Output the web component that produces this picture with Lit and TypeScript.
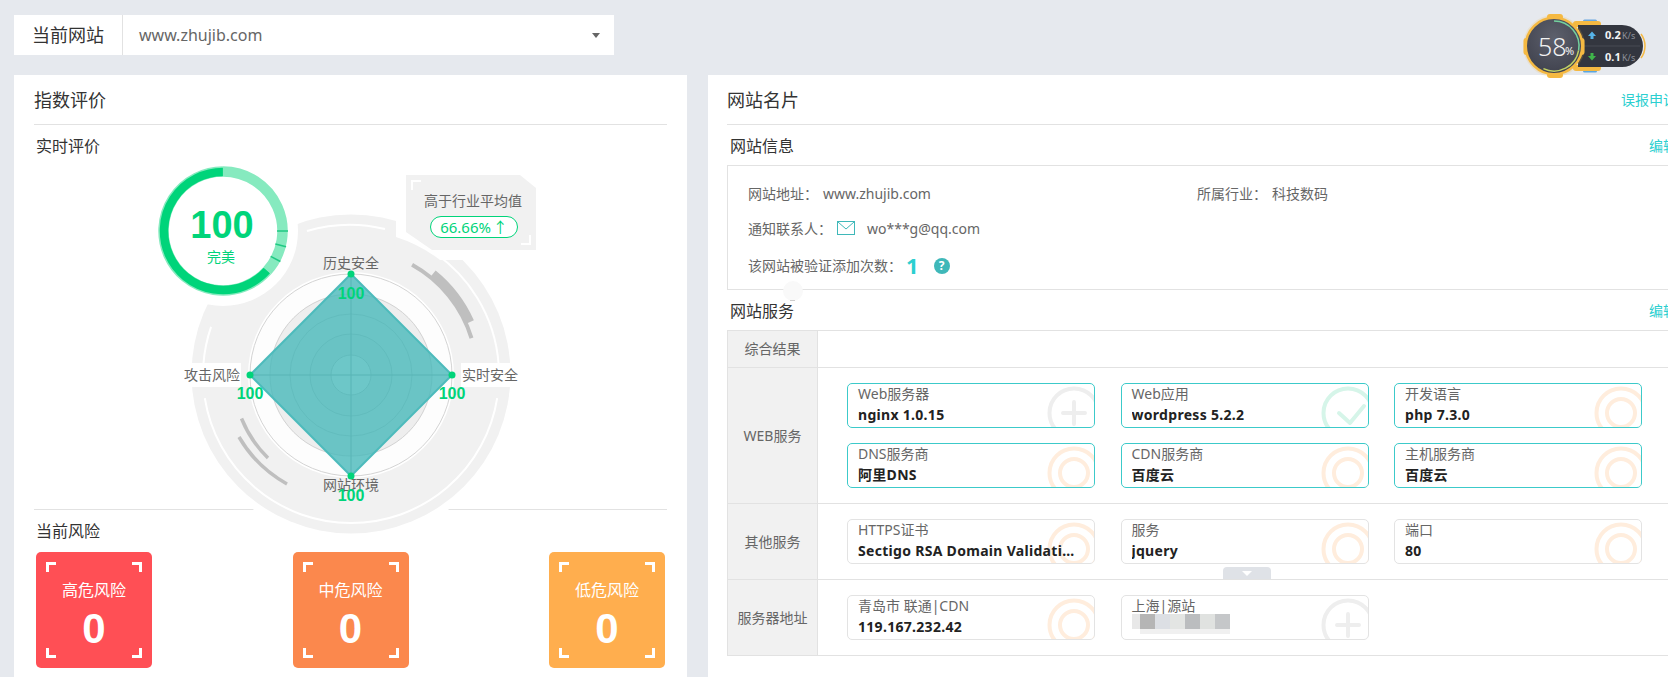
import { LitElement, html, svg, css } from 'lit';
import { customElement } from 'lit/decorators.js';
import { classMap } from 'lit/directives/class-map.js';

type IconKind = 'plus' | 'check' | 'rings';

interface Tile {
    title: string;
    value: string;
    icon: IconKind;
    masked?: boolean;
}

interface ServiceRow {
    label: string;
    active: boolean;
    tiles: Tile[];
}

const rows: ServiceRow[] = [
    {
        label: 'WEB服务',
        active: true,
        tiles: [
            { title: 'Web服务器', value: 'nginx 1.0.15', icon: 'plus' },
            { title: 'Web应用', value: 'wordpress 5.2.2', icon: 'check' },
            { title: '开发语言', value: 'php 7.3.0', icon: 'rings' },
            { title: 'DNS服务商', value: '阿里DNS', icon: 'rings' },
            { title: 'CDN服务商', value: '百度云', icon: 'rings' },
            { title: '主机服务商', value: '百度云', icon: 'rings' }
        ]
    },
    {
        label: '其他服务',
        active: false,
        tiles: [
            { title: 'HTTPS证书', value: 'Sectigo RSA Domain Validation Secure Server CA', icon: 'rings' },
            { title: '服务', value: 'jquery', icon: 'rings' },
            { title: '端口', value: '80', icon: 'rings' }
        ]
    },
    {
        label: '服务器地址',
        active: false,
        tiles: [
            { title: '青岛市 联通|CDN', value: '119.167.232.42', icon: 'rings' },
            { title: '上海|源站', value: '', icon: 'plus', masked: true }
        ]
    }
];

const risks = [
    { label: '高危风险', value: 0, color: '#ff4f55' },
    { label: '中危风险', value: 0, color: '#fb884d' },
    { label: '低危风险', value: 0, color: '#ffae4e' }
];

const mosaic = ['#b5b5b5', '#dcdfe4', '#e3e5e3', '#bbbdbf', '#e0e2e0', '#c5c7c9'];

// angles are clockwise from twelve o'clock
function arc(cx: number, cy: number, r: number, from: number, to: number) {
    const pt = (a: number) => {
        const t = (a * Math.PI) / 180;
        return `${(cx + r * Math.sin(t)).toFixed(2)} ${(cy - r * Math.cos(t)).toFixed(2)}`;
    };
    const large = to - from > 180 ? 1 : 0;
    return `M${pt(from)} A${r} ${r} 0 ${large} 1 ${pt(to)}`;
}

function tick(cx: number, cy: number, r0: number, r1: number, a: number) {
    const t = (a * Math.PI) / 180;
    return `M${cx + r0 * Math.sin(t)} ${cy - r0 * Math.cos(t)} L${cx + r1 * Math.sin(t)} ${cy - r1 * Math.cos(t)}`;
}

@customElement('radar-chart')
export class RadarChart extends LitElement {
    static styles = css`
        :host {
            display: block;
        }
        svg {
            display: block;
            overflow: visible;
        }
        text {
            font-family: "Noto Sans", "Noto Sans CJK SC", sans-serif;
        }
        .axis {
            font-size: 14px;
            fill: #666;
        }
        .score {
            font-family: "Liberation Sans", sans-serif;
            font-size: 16px;
            font-weight: 700;
            fill: #00d47a;
        }
        .big {
            font-family: "Liberation Sans", sans-serif;
            font-size: 38px;
            font-weight: 700;
            fill: #00d47a;
        }
        .word {
            font-size: 14px;
            fill: #00d47a;
        }
        .hint {
            font-size: 14px;
            fill: #666;
        }
        .pct {
            font-size: 15px;
            word-spacing: -2px;
            fill: #00d47a;
        }
    `;

    render() {
        const cx = 351;
        const cy = 375;
        const labels = [
            { x: 351, y: 262, anchor: 'middle', text: '历史安全' },
            { x: 240, y: 374, anchor: 'end', text: '攻击风险' },
            { x: 462, y: 374, anchor: 'start', text: '实时安全' },
            { x: 351, y: 484, anchor: 'middle', text: '网站环境' }
        ];
        const scores = [
            { x: 351, y: 293 },
            { x: 250, y: 393 },
            { x: 452, y: 393 },
            { x: 351, y: 495 }
        ];
        return html`
            <svg width="633" height="400" viewBox="34 160 633 400">
                <circle cx=${cx} cy="374" r="167" fill="#fff"></circle>
                <circle cx=${cx} cy="374" r="159.5" fill="#f1f1f1"></circle>

                <path d="M396 205 L396 237 A145 145 0 0 1 440 260 L475 260 L475 205 Z" fill="#fff"></path>
                <circle cx="223" cy="231" r="75" fill="#fff"></circle>
                <rect x="186" y="363" width="55" height="24" fill="#fff"></rect>
                <rect x="461" y="363" width="56" height="24" fill="#fff"></rect>

                <g fill="none" stroke="#fff" stroke-width="2">
                    <path d="M307 231 A149 149 0 0 1 385 229"></path>
                    <path d=${arc(cx, cy, 148, 31, 86)}></path>
                    <path d=${arc(cx, cy, 148, 99, 261)}></path>
                    <path d=${arc(cx, cy, 148, 274, 289)}></path>
                </g>

                <g fill="none" stroke="#bfbfbf">
                    <path d=${arc(cx, cy, 126, 29, 73)} stroke-width="4"></path>
                    <path d=${arc(cx, cy, 130, 39, 66)} stroke-width="9"></path>
                    <path d="M241.500 418.500 A117 117 0 0 0 268 458" stroke-width="3.500"></path>
                    <path d="M239 437 A127 127 0 0 0 287 484" stroke-width="3.500"></path>
                </g>

                <circle cx=${cx} cy=${cy} r="103" fill="#fff"></circle>
                <circle cx=${cx} cy=${cy} r="101" fill="#fdfdfd" stroke="#d4d4d4"></circle>
                <circle cx=${cx} cy=${cy} r="81" fill="#eeeeee" stroke="#d2d2d2"></circle>
                <circle cx=${cx} cy=${cy} r="61" fill="#eeeeee" stroke="#c8c8c8"></circle>
                <circle cx=${cx} cy=${cy} r="41" fill="#ebebeb" stroke="#c4c4c4"></circle>
                <circle cx=${cx} cy=${cy} r="20" fill="#ffffff" stroke="#c4c4c4"></circle>

                <polygon
                    points="351,274 452,375 351,476 250,375"
                    fill="#49b9ba"
                    fill-opacity="0.8"
                    stroke="#4dbbbc"
                    stroke-width="2"
                ></polygon>
                <path d="M351 274 V476 M250 375 H452" stroke="#58b4b5" stroke-width="1"></path>

                ${labels.map(l => svg`
                    <text class="axis" x=${l.x} y=${l.y} text-anchor=${l.anchor} dominant-baseline="central">${l.text}</text>
                `)}
                ${[[351, 274], [250, 375], [452, 375], [351, 476]].map(p => svg`
                    <circle cx=${p[0]} cy=${p[1]} r="3.500" fill="#00d47a"></circle>
                `)}
                ${scores.map(s => svg`
                    <text class="score" x=${s.x} y=${s.y} text-anchor="middle" dominant-baseline="central">100</text>
                `)}

                <g fill="none">
                    <path d=${arc(223, 231, 59.5, 0, 132)} stroke="#86eabf" stroke-width="10.500"></path>
                    <path d=${arc(223, 231, 59.5, 132, 359.9)} stroke="#86eabf" stroke-width="10.500"></path>
                    <path d=${arc(223, 231, 59, 132, 359.900)} stroke="#00d47a" stroke-width="8.500"></path>
                    <path d=${tick(223, 231, 54, 65, 90)} stroke="#1fc983" stroke-width="1.500"></path>
                    <path d=${tick(223, 231, 54, 65, 104)} stroke="#1fc983" stroke-width="1.500"></path>
                    <path d=${tick(223, 231, 54, 65, 118)} stroke="#1fc983" stroke-width="1.500"></path>
                </g>
                <text class="big" x="222" y="225" text-anchor="middle" dominant-baseline="central">100</text>
                <text class="word" x="221" y="256" text-anchor="middle" dominant-baseline="central">完美</text>

                <polygon points="406,175 520,175 536,188 536,250 432,250 406,232" fill="#f1f1f1"></polygon>
                <path d="M412 190 V181 H421" fill="none" stroke="#fff" stroke-width="2"></path>
                <path d="M530 235 V244 H521" fill="none" stroke="#fff" stroke-width="2"></path>
                <text class="hint" x="473" y="200" text-anchor="middle" dominant-baseline="central">高于行业平均值</text>
                <rect x="430.500" y="216.500" width="87" height="21" rx="10.500" fill="#fff" stroke="#00d47a"></rect>
                <text class="pct" x="474" y="227" text-anchor="middle" dominant-baseline="central">66.66% ↑</text>
            </svg>
        `;
    }
}

@customElement('float-meter')
export class FloatMeter extends LitElement {
    static styles = css`
        :host {
            position: absolute;
            left: 1516px;
            top: 8px;
            width: 134px;
            height: 76px;
        }
        svg {
            display: block;
        }
        text {
            font-family: "Noto Sans", sans-serif;
        }
        .pct {
            font-size: 25px;
            font-weight: 300;
            fill: #f2f2f2;
        }
        .unit {
            font-size: 11px;
            fill: #f2f2f2;
        }
        .rate {
            font-size: 11px;
            font-weight: 700;
            fill: #f4f4f4;
        }
        .kb {
            font-size: 9px;
            fill: #8d9099;
        }
    `;

    render() {
        return html`
            <svg width="134" height="76" viewBox="1516 8 134 76">
                <defs>
                    <radialGradient id="face" cx="50%" cy="35%" r="70%">
                        <stop offset="0%" stop-color="#5d606c"></stop>
                        <stop offset="100%" stop-color="#3e404c"></stop>
                    </radialGradient>
                </defs>
                <rect x="1583" y="19.500" width="14" height="3" rx="1.500" fill="#6aa8e0"></rect>
                <rect x="1583" y="69.500" width="14" height="3" rx="1.500" fill="#5aa6e0"></rect>
                <rect x="1573" y="21" width="28" height="6" rx="3" fill="#f5b942"></rect>
                <rect x="1573" y="65" width="28" height="6" rx="3" fill="#f5b942"></rect>
                <path d="M1641 34 A20 20 0 0 1 1641 58" fill="none" stroke="#f5b942" stroke-width="1.500"></path>
                <path d="M1578 25 H1622 A21 21 0 0 1 1622 67 H1578 Z" fill="#33363f"></path>
                <path d="M1584 46 H1640" stroke="#484b54"></path>

                <circle cx="1554" cy="46" r="31" fill="#f5b942" fill-opacity="0.18"></circle>
                <g fill="#f5b942">
                    <rect x="1547" y="14" width="16" height="6" rx="3"></rect>
                    <rect x="1547" y="72" width="16" height="6" rx="3"></rect>
                    <rect x="1523.500" y="38" width="6" height="17" rx="3"></rect>
                    <rect x="1578.500" y="38" width="6" height="17" rx="3"></rect>
                </g>
                <circle cx="1554" cy="46" r="28.250" fill="url(#face)" stroke="#f5b942" stroke-width="2.500"></circle>
                <path d=${arc(1554, 46, 25, 0, 100)} fill="none" stroke="#74d29f" stroke-width="1.500"></path>
                <path d=${arc(1554, 46, 25, 100, 205)} fill="none" stroke="#c0d164" stroke-width="1.500"></path>

                <text class="pct" x="1538" y="46" dominant-baseline="central">58</text>
                <text class="unit" x="1565" y="50" dominant-baseline="central">%</text>

                <path d="M1592 31.500 L1596 36 H1593.500 V39 H1590.500 V36 H1588 Z" fill="#56b3e8"></path>
                <path d="M1592 60.500 L1596 56 H1593.500 V53 H1590.500 V56 H1588 Z" fill="#3fb44a"></path>
                <text class="rate" x="1605" y="39">0.2</text>
                <text class="kb" x="1622" y="39">K/s</text>
                <text class="rate" x="1605" y="61">0.1</text>
                <text class="kb" x="1622" y="61">K/s</text>
            </svg>
        `;
    }
}

@customElement('app-root')
export class AppRoot extends LitElement {
    static styles = css`
        :host {
            display: block;
            position: relative;
            width: 1668px;
            height: 677px;
            overflow: hidden;
            background: #e6e9ee;
            font-family: "Noto Sans", "Noto Sans CJK SC", sans-serif;
            color: #333;
        }
        .site-bar {
            display: flex;
            align-items: center;
            width: 600px;
            height: 40px;
            margin: 15px 0 20px 14px;
            background: #fff;
        }
        .site-label {
            box-sizing: border-box;
            width: 109px;
            height: 40px;
            padding-left: 18px;
            line-height: 40px;
            font-size: 18px;
            border-right: 1px solid #e2e2e2;
        }
        .site-value {
            flex: 1;
            padding-left: 16px;
            font-size: 16px;
            color: #666;
        }
        .caret {
            width: 0;
            height: 0;
            margin-right: 14px;
            border-left: 4px solid transparent;
            border-right: 4px solid transparent;
            border-top: 5px solid #666;
        }
        .columns {
            display: flex;
            align-items: flex-start;
            gap: 21px;
            padding-left: 14px;
            width: 1800px;
        }
        .card {
            box-sizing: border-box;
            flex: none;
            height: 602px;
            background: #fff;
        }
        .left {
            width: 673px;
            padding: 0 20px;
        }
        .right {
            width: 990px;
            padding: 0 21px 0 19px;
        }
        .head {
            display: flex;
            justify-content: space-between;
            align-items: center;
            box-sizing: border-box;
            height: 50px;
            padding-bottom: 2px;
            border-bottom: 1px solid #e2e2e2;
        }
        .head h2 {
            margin: 0;
            font-size: 18px;
            font-weight: 400;
        }
        .link {
            font-size: 14px;
            color: #2ccfd0;
        }
        .sub {
            display: flex;
            justify-content: space-between;
            align-items: center;
            margin: 0;
            font-size: 16px;
            font-weight: 400;
        }
        .sub.realtime {
            height: 35px;
            padding: 5px 2px 0;
            box-sizing: border-box;
        }
        .sub.current {
            height: 42px;
            padding: 0 2px 2px;
            box-sizing: border-box;
        }
        .sub.info {
            height: 40px;
            padding: 0 0 0 3px;
            box-sizing: border-box;
        }
        .chart {
            position: relative;
            height: 349px;
            border-bottom: 1px solid #e2e2e2;
        }
        radar-chart {
            position: absolute;
            left: 0;
            top: 0;
        }
        .risks {
            display: flex;
            justify-content: space-between;
            padding: 0 2px;
        }
        .risk {
            position: relative;
            box-sizing: border-box;
            width: 116px;
            height: 116px;
            padding-top: 27px;
            border-radius: 5px;
            text-align: center;
            color: #fff;
        }
        .risk-label {
            font-size: 16px;
            line-height: 22px;
        }
        .risk-value {
            font-family: "Liberation Sans", sans-serif;
            font-size: 42px;
            font-weight: 700;
            line-height: 56px;
        }
        .corner {
            position: absolute;
            width: 7px;
            height: 7px;
            border: 0 solid #fff;
        }
        .tl {
            left: 10px;
            top: 10px;
            border-width: 3px 0 0 3px;
        }
        .tr {
            right: 10px;
            top: 10px;
            border-width: 3px 3px 0 0;
        }
        .bl {
            left: 10px;
            bottom: 10px;
            border-width: 0 0 3px 3px;
        }
        .br {
            right: 10px;
            bottom: 10px;
            border-width: 0 3px 3px 0;
        }
        .info-box {
            position: relative;
            box-sizing: border-box;
            height: 125px;
            padding: 17px 20px 0;
            border: 1px solid #e2e2e2;
            font-size: 14px;
            color: #666;
        }
        .info-row {
            display: flex;
            align-items: center;
            height: 20px;
            margin-bottom: 15px;
        }
        .info-row.last {
            margin: 17px 0 0;
        }
        .pair {
            display: flex;
            align-items: center;
            width: 449px;
        }
        .pair .val {
            margin-left: 5px;
        }
        .mail {
            margin: 0 12px 0 5px;
        }
        .count {
            margin: 0 15px 0 4px;
            font-size: 22px;
            font-weight: 700;
            color: #2ccfd0;
        }
        .help {
            width: 16px;
            height: 16px;
            margin-top: 2px;
            border-radius: 50%;
            background: #3fb8b9;
            color: #fff;
            font-size: 12px;
            font-weight: 700;
            line-height: 16px;
            text-align: center;
        }
        .speck {
            position: absolute;
            left: 55px;
            bottom: -12px;
            width: 20px;
            height: 20px;
            border-radius: 50%;
            background: #f9f9f9;
        }
        .speck::after {
            content: "";
            position: absolute;
            left: 7px;
            bottom: 0;
            width: 5px;
            height: 1px;
            background: #cccccc;
        }
        .table {
            border: 1px solid #e2e2e2;
            border-bottom: 0;
        }
        .row {
            position: relative;
            display: flex;
            border-bottom: 1px solid #e2e2e2;
        }
        .row-label {
            box-sizing: border-box;
            flex: none;
            display: flex;
            align-items: center;
            justify-content: center;
            width: 90px;
            padding-bottom: 2px;
            font-size: 14px;
            color: #666;
            background: #f1f1f1;
            border-right: 1px solid #e2e2e2;
        }
        .row.summary {
            height: 36px;
        }
        .tiles {
            display: grid;
            grid-template-columns: repeat(3, 248px);
            gap: 15px 25.500px;
            padding: 15px 0 15px 29px;
        }
        .tile {
            position: relative;
            box-sizing: border-box;
            height: 45px;
            padding: 0 10px;
            overflow: hidden;
            border: 1px solid #e3e3e3;
            border-radius: 5px;
        }
        .tile.active {
            border-color: #3ccaca;
        }
        .tile-title {
            position: relative;
            font-size: 14px;
            line-height: 20px;
            color: #666;
        }
        .tile-value {
            position: relative;
            max-width: 222px;
            margin-top: 1px;
            overflow: hidden;
            white-space: nowrap;
            text-overflow: ellipsis;
            font-size: 14px;
            font-weight: 700;
            letter-spacing: 0.3px;
            line-height: 20px;
            color: #222;
        }
        .mark {
            position: absolute;
            right: -7px;
            top: 2px;
        }
        .mosaic {
            position: relative;
            display: flex;
            width: 90px;
            height: 15px;
            margin: -2px 0 0 8px;
            box-shadow: 0 5px 0 #f0f0f0, -8px 0 0 #e8e8e8;
        }
        .mosaic span {
            flex: 1;
        }
        .fold {
            position: absolute;
            left: 495px;
            bottom: 0;
            display: flex;
            justify-content: center;
            width: 48px;
            height: 12px;
            padding-top: 4px;
            box-sizing: border-box;
            border-radius: 4px 4px 0 0;
            background: #dfe2e7;
        }
        .fold i {
            width: 0;
            height: 0;
            border-left: 5px solid transparent;
            border-right: 5px solid transparent;
            border-top: 5px solid #fff;
        }
    `;

    renderMark(kind: IconKind) {
        const color = kind === 'rings' ? '#ffeddd' : kind === 'check' ? '#d6f5e9' : '#eeeeee';
        return html`
            <svg class="mark" width="54" height="54" viewBox="0 0 54 54" fill="none" stroke=${color} stroke-width="4">
                <circle cx="27" cy="27" r="24.500"></circle>
                ${kind === 'rings' ? svg`<circle cx="27" cy="27" r="14"></circle>` : ''}
                ${kind === 'plus' ? svg`<path d="M16 27 H38 M27 16 V38" stroke-linecap="round"></path>` : ''}
                ${kind === 'check' ? svg`<path d="M18 27 L29 37 L43 20" stroke-linecap="round" stroke-linejoin="round"></path>` : ''}
            </svg>
        `;
    }

    renderTile(tile: Tile, active: boolean) {
        return html`
            <div class=${classMap({ tile: true, active })}>
                ${this.renderMark(tile.icon)}
                <div class="tile-title">${tile.title}</div>
                ${tile.masked
                    ? html`<div class="mosaic">${mosaic.map(c => html`<span style="background:${c}"></span>`)}</div>`
                    : html`<div class="tile-value">${tile.value}</div>`}
            </div>
        `;
    }

    render() {
        return html`
            <div class="site-bar">
                <div class="site-label">当前网站</div>
                <div class="site-value">www.zhujib.com</div>
                <div class="caret"></div>
            </div>

            <div class="columns">
                <section class="card left">
                    <div class="head"><h2>指数评价</h2></div>
                    <h3 class="sub realtime">实时评价</h3>
                    <div class="chart"><radar-chart></radar-chart></div>
                    <h3 class="sub current">当前风险</h3>
                    <div class="risks">
                        ${risks.map(r => html`
                            <div class="risk" style="background:${r.color}">
                                <i class="corner tl"></i><i class="corner tr"></i>
                                <i class="corner bl"></i><i class="corner br"></i>
                                <div class="risk-label">${r.label}</div>
                                <div class="risk-value">${r.value}</div>
                            </div>
                        `)}
                    </div>
                </section>

                <section class="card right">
                    <div class="head"><h2>网站名片</h2><span class="link">误报申诉</span></div>
                    <h3 class="sub info">网站信息<span class="link">编辑</span></h3>
                    <div class="info-box">
                        <div class="info-row">
                            <div class="pair">网站地址：<span class="val">www.zhujib.com</span></div>
                            <div class="pair">所属行业：<span class="val">科技数码</span></div>
                        </div>
                        <div class="info-row">
                            通知联系人：
                            <svg class="mail" width="18" height="14" viewBox="0 0 18 14" fill="none" stroke="#3fb8b9" stroke-width="1">
                                <rect x="0.500" y="0.500" width="17" height="13"></rect>
                                <path d="M1 1 L9 8 L17 1"></path>
                            </svg>
                            wo***g@qq.com
                        </div>
                        <div class="info-row last">
                            该网站被验证添加次数：<span class="count">1</span><span class="help">?</span>
                        </div>
                        <span class="speck"></span>
                    </div>

                    <h3 class="sub info">网站服务<span class="link">编辑</span></h3>
                    <div class="table">
                        <div class="row summary"><div class="row-label">综合结果</div></div>
                        ${rows.map((row, i) => html`
                            <div class="row">
                                <div class="row-label">${row.label}</div>
                                <div class="tiles">${row.tiles.map(t => this.renderTile(t, row.active))}</div>
                                ${i === 1 ? html`<div class="fold"><i></i></div>` : ''}
                            </div>
                        `)}
                    </div>
                </section>
            </div>

            <float-meter></float-meter>
        `;
    }
}
